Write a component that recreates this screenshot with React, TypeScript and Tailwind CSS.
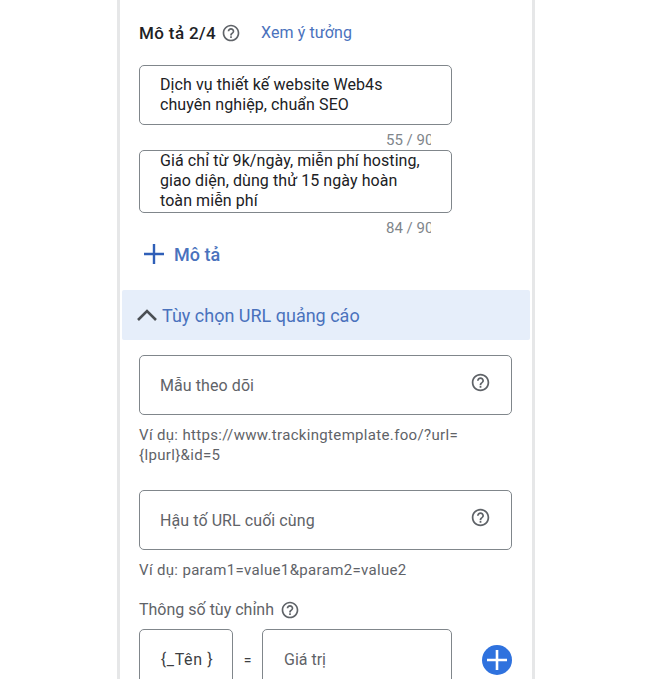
const font = { fontFamily: "Roboto, sans-serif" };

function Help({ className }: { className: string }) {
  return (
    <svg viewBox="0 0 24 24" fill="currentColor" className={className}>
      <path d="M11 18h2v-2h-2v2zm1-16C6.48 2 2 6.48 2 12s4.48 10 10 10 10-4.48 10-10S17.52 2 12 2zm0 18c-4.41 0-8-3.59-8-8s3.59-8 8-8 8 3.59 8 8-3.59 8-8 8zm0-14c-2.21 0-4 1.79-4 4h2c0-1.1.9-2 2-2s2 .9 2 2c0 2-3 1.75-3 5h2c0-2.25 3-2.5 3-5 0-2.21-1.79-4-4-4z" />
    </svg>
  );
}

function UrlField({ label }: { label: string }) {
  return (
    <div className="flex h-[60px] w-[373px] items-center justify-between rounded-[5px] border border-[#80868b] pl-[20px] pr-[20px]">
      <span className="pt-[1px] text-[16px] tracking-[0.08px] text-[#5f6368]">{label}</span>
      <Help className="mb-[5px] h-[21px] w-[21px] text-[#5f6368]" />
    </div>
  );
}

function Counter({ text }: { text: string }) {
  return (
    <div className="ml-[200px] h-[25px] w-[92px] overflow-hidden whitespace-nowrap pt-[5px] pl-[47px] text-[15px] leading-[20px] text-[#80868b]">
      {text}
    </div>
  );
}

export default function App() {
  return (
    <div className="h-[679px] w-[650px] overflow-hidden bg-white" style={font}>
      <div className="ml-[117px] h-[679px] w-[418px] border-x-[3px] border-[#e6e7e8] pl-[19px]">
        {/* mô tả */}
        <div className="flex h-[65px] items-start pt-[22px]">
          <span className="text-[17px] leading-[22px] font-medium tracking-[0.37px] text-[#202124]">Mô tả 2/4</span>
          <Help className="ml-[5px] mt-[1px] h-[20px] w-[20px] text-[#5f6368]" />
          <span className="ml-[20px] text-[16px] leading-[22px] tracking-[0.1px] text-[#4a72bd]">Xem ý tưởng</span>
        </div>

        <div className="h-[60px] w-[313px] rounded-[5px] border border-[#80868b] pl-[20px] pt-[9px] text-[16px] leading-[20px] tracking-[0.08px] text-[#202124]">
          Dịch vụ thiết kế website Web4s
          <br />
          chuyên nghiệp, chuẩn SEO
        </div>
        <Counter text="55 / 90" />
        <div className="h-[63px] w-[313px] overflow-hidden rounded-[5px] border border-[#80868b] pl-[20px] text-[16px] leading-[20px] tracking-[0.08px] text-[#202124]">
          Giá chỉ từ 9k/ngày, miễn phí hosting,
          <br />
          giao diện, dùng thử 15 ngày hoàn
          <br />
          toàn miễn phí
        </div>
        <Counter text="84 / 90" />

        <div className="flex h-[32px] items-center pl-[4px]">
          <svg viewBox="0 0 22 22" className="h-[22px] w-[22px] text-[#2f5fb8]" stroke="currentColor" strokeWidth="2.4">
            <path d="M11 1v20M1 11h20" />
          </svg>
          <span className="ml-[9px] text-[18px] font-medium text-[#4a72bd]">Mô tả</span>
        </div>

        {/* tùy chọn url */}
        <div className="-ml-[17px] mt-[20px] flex h-[50px] w-[408px] items-center rounded-[2px] bg-[#e6eefa] pl-[14px]">
          <svg viewBox="0 0 22 14" fill="none" className="h-[14px] w-[22px] text-[#4b4f54]" stroke="currentColor" strokeWidth="2.6">
            <path d="M2 12 11 3l9 9" />
          </svg>
          <span className="ml-[4px] text-[18px] text-[#4a72bd]">Tùy chọn URL quảng cáo</span>
        </div>

        <div className="mt-[15px]">
          <UrlField label="Mẫu theo dõi" />
        </div>
        <p className="mt-[10px] h-[65px] text-[15px] leading-[20px] tracking-[0.33px] text-[#5f6368]">
          Ví dụ: https://www.trackingtemplate.foo/?url=
          <br />
          {"{lpurl}&id=5"}
        </p>
        <UrlField label="Hậu tố URL cuối cùng" />
        <p className="mt-[10px] text-[15px] leading-[20px] tracking-[0.33px] text-[#5f6368]">
          Ví dụ: param1=value1&amp;param2=value2
        </p>

        <div className="mt-[19px] flex h-[22px] items-center">
          <span className="text-[16px] text-[#5f6368]">Thông số tùy chỉnh</span>
          <Help className="ml-[6px] h-[20px] w-[20px] text-[#5f6368]" />
        </div>

        {/* thông số */}
        <div className="mt-[8px] flex">
          <div className="flex h-[70px] w-[94px] items-center justify-center rounded-[5px] border border-[#80868b] pb-[8px] pl-[2px] text-[16px] tracking-[0.6px] text-[#3c4043]">
            {"{_Tên }"}
          </div>
          <div className="flex h-[62px] w-[29px] items-center justify-center text-[14px] text-[#3c4043]">=</div>
          <div className="flex h-[70px] w-[190px] items-center rounded-[5px] border border-[#80868b] pb-[8px] pl-[21px] text-[16px] text-[#5f6368]">
            Giá trị
          </div>
          <svg viewBox="0 0 30 30" className="ml-[30px] mt-[16px] h-[30px] w-[30px]">
            <circle cx="15" cy="15" r="15" fill="#2f72de" />
            <path d="M15 5v20M5 15h20" stroke="#fff" strokeWidth="2.6" />
          </svg>
        </div>
      </div>
    </div>
  );
}
